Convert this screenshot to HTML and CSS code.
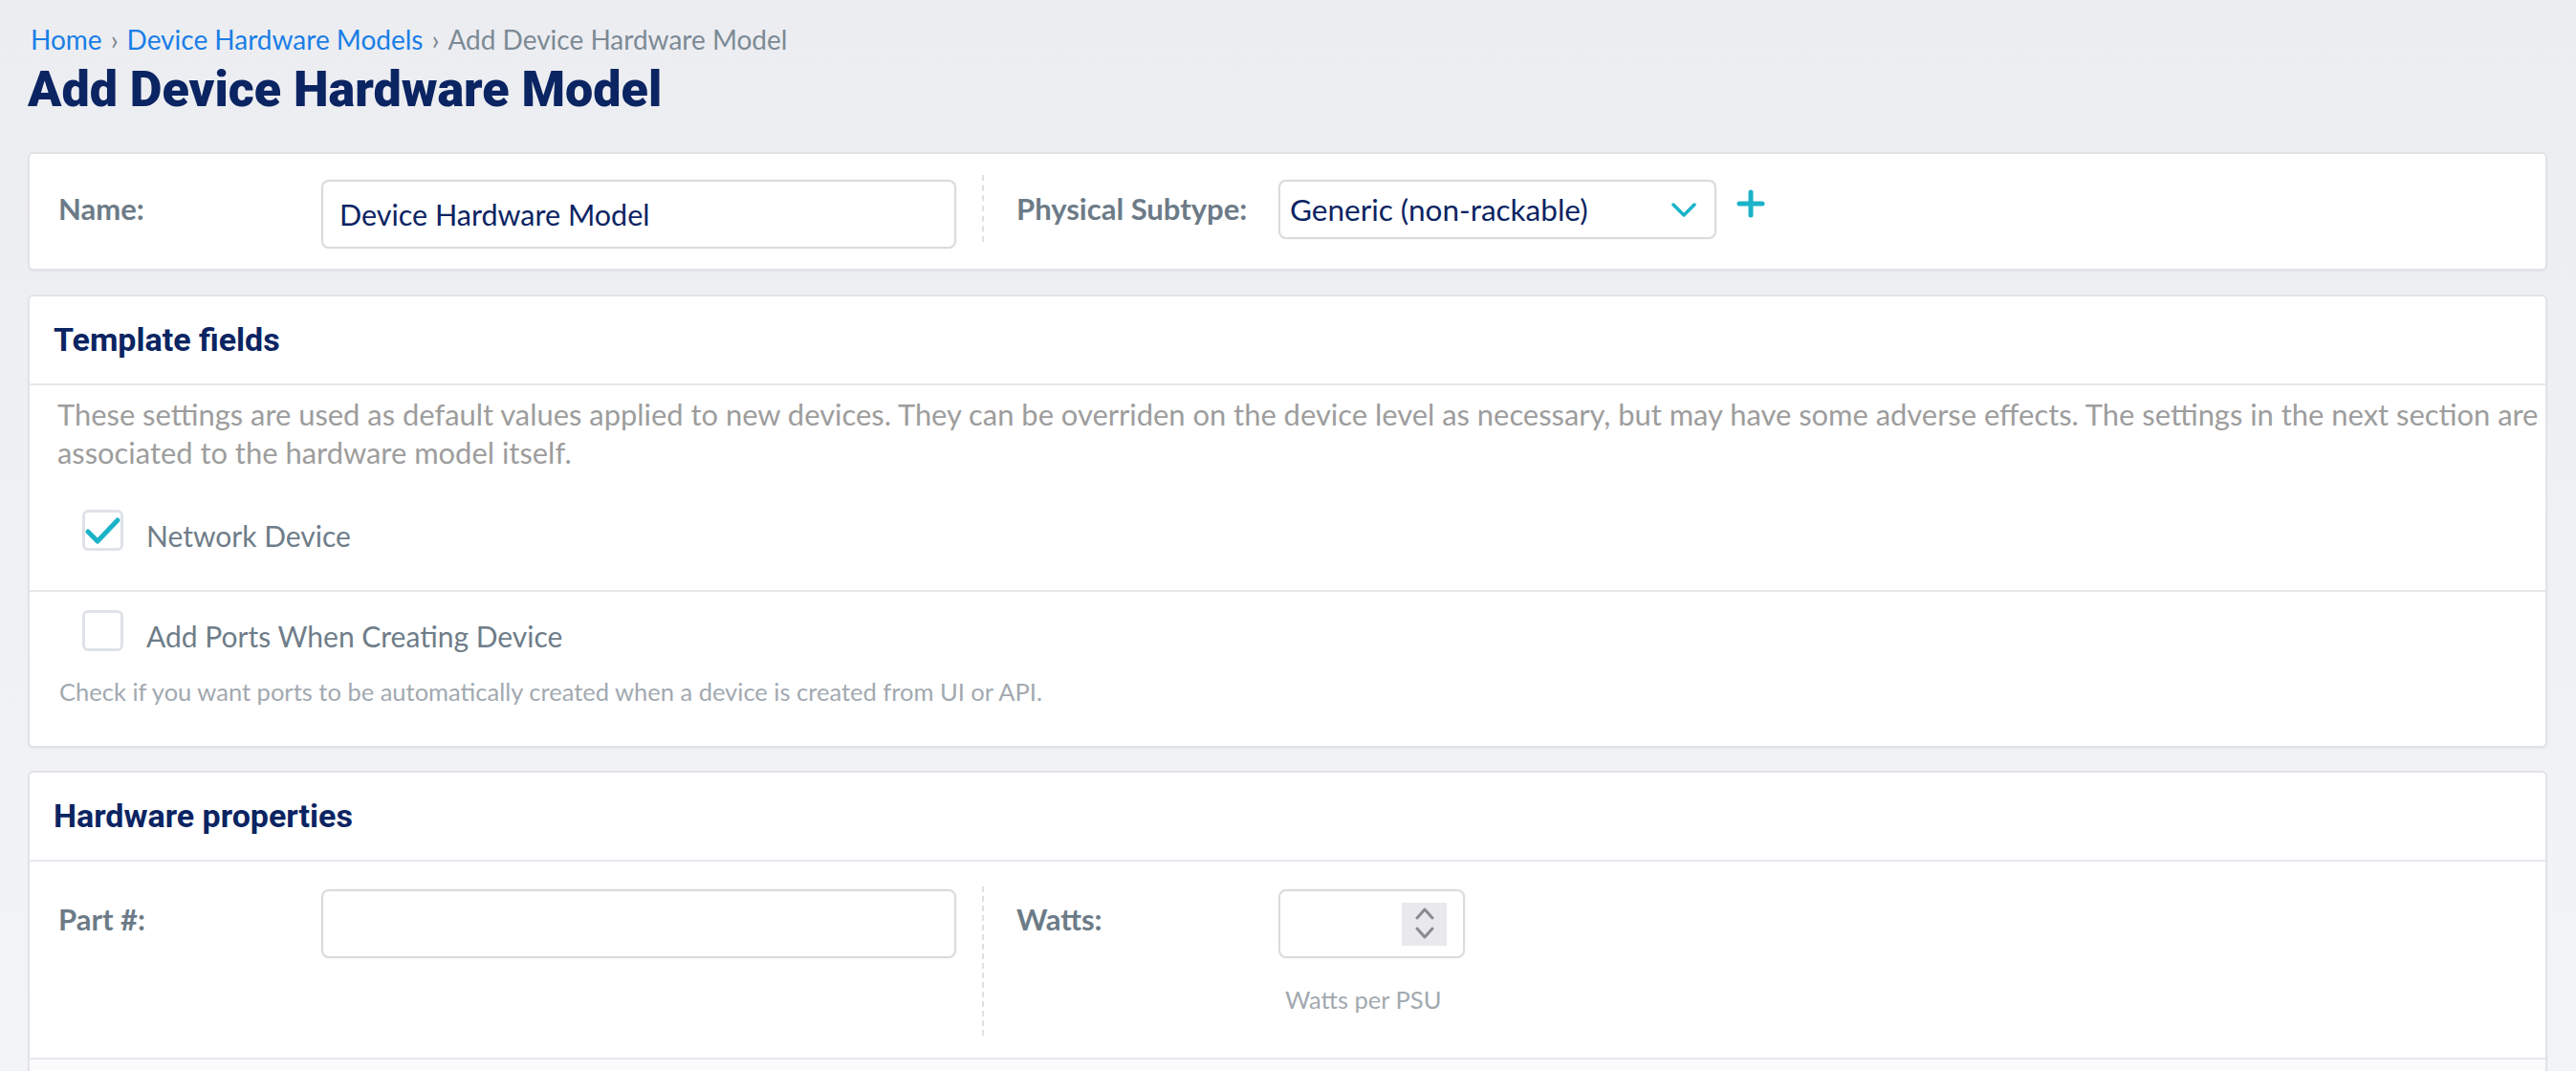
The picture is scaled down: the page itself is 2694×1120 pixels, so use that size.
FILE: index.html
```html
<!DOCTYPE html>
<html lang="en">
<head>
<meta charset="utf-8">
<title>Add Device Hardware Model</title>
<link rel="stylesheet" href="styles.css">
</head>
<body>
<div class="page">
  <nav class="crumbs">
    <a class="crumb-link" href="#">Home</a><span class="crumb-sep">›</span><a class="crumb-link" href="#">Device Hardware Models</a><span class="crumb-sep">›</span><span class="crumb-current">Add Device Hardware Model</span>
  </nav>
  <h1 class="title">Add Device Hardware Model</h1>

  <section class="card card-name">
    <div class="field-row">
      <div class="half half-left">
        <label class="field-label">Name:</label>
        <div class="text-input"><span class="input-value">Device Hardware Model</span></div>
      </div>
      <div class="half half-right">
        <label class="field-label">Physical Subtype:</label>
        <div class="select-box">
          <span class="input-value">Generic (non-rackable)</span>
          <svg class="select-chevron" width="26" height="16" viewBox="0 0 26 16"><polyline points="2,2 13,13 24,2" fill="none" stroke="#1bb3c8" stroke-width="3.5" stroke-linecap="round" stroke-linejoin="round"/></svg>
        </div>
        <svg class="plus" width="30" height="30" viewBox="0 0 30 30"><path d="M15 3 V27 M3 15 H27" fill="none" stroke="#1bb3c8" stroke-width="5" stroke-linecap="round"/></svg>
      </div>
    </div>
  </section>

  <section class="card card-template">
    <h2 class="card-head">Template fields</h2>
    <p class="desc">These settings are used as default values applied to new devices. They can be overriden on the device level as necessary, but may have some adverse effects. The settings in the next section are associated to the hardware model itself.</p>
    <div class="check-row check-row-first">
      <div class="checkbox">
        <svg class="check-mark" width="43" height="43" viewBox="0 0 43 43"><polyline points="6,23 16,33 37,11" fill="none" stroke="#1bb3c8" stroke-width="5" stroke-linecap="round" stroke-linejoin="round"/></svg>
      </div>
      <span class="check-label">Network Device</span>
    </div>
    <div class="check-block">
      <div class="check-row">
        <div class="checkbox"></div>
        <span class="check-label">Add Ports When Creating Device</span>
      </div>
      <p class="help">Check if you want ports to be automatically created when a device is created from UI or API.</p>
    </div>
  </section>

  <section class="card card-hardware">
    <h2 class="card-head">Hardware properties</h2>
    <div class="field-row hw-row">
      <div class="half half-left hw-left">
        <label class="field-label">Part #:</label>
        <div class="text-input"></div>
      </div>
      <div class="half half-right hw-right">
        <label class="field-label">Watts:</label>
        <div class="watts-col">
          <div class="number-input">
            <div class="spinner">
              <svg width="20" height="34" viewBox="0 0 20 34"><polyline points="2,11 10,2 18,11" fill="none" stroke="#8b8a94" stroke-width="3" stroke-linecap="round" stroke-linejoin="round"/><polyline points="2,22 10,31 18,22" fill="none" stroke="#8b8a94" stroke-width="3" stroke-linecap="round" stroke-linejoin="round"/></svg>
            </div>
          </div>
          <p class="hint">Watts per PSU</p>
        </div>
      </div>
    </div>
    <div class="next-row"></div>
  </section>
</div>
</body>
</html>
```

FILE: styles.css
```css
html, body {
  margin: 0;
  height: 1120px;
  overflow: hidden;
}

body {
  background: linear-gradient(180deg, #ecedf1 0%, #f3f4f6 100%);
  font-family: Lato, "Noto Sans", sans-serif;
}

.page {
  padding: 25px 30px 0 29px;
}

.crumbs {
  font-size: 28px;
  line-height: 32px;
  height: 32px;
  padding-left: 3px;
  color: #7c8a95;
  white-space: nowrap;
}

.crumb-link {
  color: #1a7ee6;
  text-decoration: none;
}

.crumb-sep {
  margin: 0 9px;
  color: #7c8893;
}

.crumb-current {
  color: #7c8a95;
}

.title {
  margin: 9px 0 0;
  font-family: Roboto, sans-serif;
  font-weight: 900;
  font-size: 52px;
  line-height: 56px;
  color: #0b2462;
  letter-spacing: 0;
}

.card {
  background: #fff;
  border: 2px solid #e1e3e7;
  border-radius: 6px;
  box-shadow: 0 1px 2px rgba(0, 0, 0, 0.05);
}

.card-name {
  margin-top: 37px;
  padding: 22px 0 21px;
}

.card-template {
  margin-top: 25px;
}

.card-hardware {
  margin-top: 24px;
  border-bottom: none;
  border-radius: 6px 6px 0 0;
}

.field-row {
  display: flex;
  align-items: flex-start;
}

.half {
  display: flex;
  align-items: flex-start;
  box-sizing: border-box;
}

.half-left {
  width: 996px;
  padding: 5px 27px 0 30px;
}

.half-right {
  border-left: 2px dashed #dde1e6;
  padding: 5px 0 3px 34px;
}

.field-label {
  flex: none;
  width: 274px;
  padding-top: 12px;
  font-weight: 700;
  font-size: 31px;
  line-height: 36px;
  color: #6c7b87;
}

.half-left .field-label {
  width: 275px;
}

.text-input,
.select-box,
.number-input {
  box-sizing: border-box;
  border: 2px solid #dbdbdb;
  border-radius: 8px;
  box-shadow: 0 0 2px rgba(0, 0, 0, 0.08);
  background: #fff;
}

.text-input {
  width: 664px;
  height: 72px;
  display: flex;
  align-items: center;
  padding-left: 17px;
}

.input-value {
  font-size: 30.5px;
  color: #0b2462;
  white-space: nowrap;
}

.select-box {
  width: 458px;
  height: 62px;
  display: flex;
  align-items: center;
  justify-content: space-between;
  padding: 0 19px 0 10px;
}

.select-box .input-value {
  font-size: 31.5px;
}

.select-chevron {
  display: block;
  margin-top: 1px;
}

.plus {
  display: block;
  flex: none;
  margin: 10px 0 0 21px;
}

.card-head {
  margin: 0;
  padding: 25px 25px 26px;
  border-bottom: 2px solid #e5e8ec;
  font-family: Roboto, sans-serif;
  font-weight: 700;
  font-size: 34px;
  line-height: 40px;
  color: #0b2462;
}

.desc {
  margin: 0;
  padding: 11px 0 0 29px;
  font-size: 30.9px;
  line-height: 40px;
  color: #9d9d9d;
}

.check-row {
  display: flex;
  align-items: flex-start;
  padding-left: 55px;
}

.check-row-first {
  padding-top: 39px;
  padding-bottom: 39px;
  border-bottom: 2px solid #e5e8ec;
}

.checkbox {
  position: relative;
  flex: none;
  width: 43px;
  height: 43px;
  box-sizing: border-box;
  border: 3px solid #dfe3e8;
  border-radius: 6px;
  background: #fff;
}

.check-mark {
  position: absolute;
  left: -3px;
  top: -3px;
}

.check-label {
  margin-left: 24px;
  padding-top: 9px;
  font-size: 30px;
  line-height: 36px;
  color: #6e7d89;
}

.check-block {
  padding: 19px 0 42px;
}

.help {
  margin: 25px 0 0;
  padding-left: 31px;
  font-size: 25.5px;
  line-height: 30px;
  color: #a2a9b0;
}

.hw-row {
  padding: 26px 0 23px;
  border-bottom: 2px solid #e5e8ec;
}

.hw-left {
  padding-top: 3px;
}

.hw-right {
  padding: 3px 0 23px 34px;
}

.hw-right .field-label,
.hw-left .field-label {
  padding-top: 13px;
}

.number-input {
  width: 195px;
  height: 72px;
  display: flex;
  align-items: center;
  justify-content: flex-end;
  padding-right: 17px;
}

.spinner {
  width: 47px;
  height: 45px;
  background: #e9e8ed;
  display: flex;
  align-items: center;
  justify-content: center;
}

.spinner svg {
  display: block;
}

.hint {
  margin: 28px 0 0;
  padding-left: 7px;
  font-size: 25.5px;
  line-height: 30px;
  color: #a2a9b0;
}

.next-row {
  height: 60px;
  background: #fbfbfc;
}
```
